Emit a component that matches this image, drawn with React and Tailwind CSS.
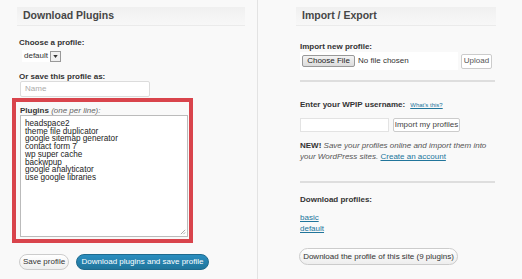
import React from 'react';

const plugins = [
  'headspace2',
  'theme file duplicator',
  'google sitemap generator',
  'contact form 7',
  'wp super cache',
  'backwpup',
  'google analyticator',
  'use google libraries',
];

function SectionTitle({ children, className }) {
  return (
    <div
      className={`h-[19px] flex items-center pl-[6px] text-[10.5px] font-bold text-[#464646] bg-gradient-to-b from-[#f0f0f0] to-[#f8f8f8] border-b border-[#ebebeb] ${className}`}
    >
      {children}
    </div>
  );
}

export default function App() {
  return (
    <div
      className="w-[522px] h-[279px] bg-[#f9f9f9] flex text-[#333] overflow-hidden"
      style={{ fontFamily: '"Liberation Sans", Arial, sans-serif' }}
    >
      {/* Download Plugins */}
      <div className="w-[258px] shrink-0 border-r border-[#e3e3e3] flex flex-col pt-[7px]">
        <SectionTitle className="ml-[17px] w-[228px]">Download Plugins</SectionTitle>

        <div className="ml-[19px] mt-[12px] text-[8px] font-bold leading-[10px]">Choose a profile:</div>
        <div className="ml-[22px] mt-[2px] flex items-center h-[12px]">
          <span className="bg-white h-[12px] px-[2px] text-[8px] leading-[12px]">default</span>
          <span className="w-[11px] h-[11px] border border-[#999] bg-[#f0f0f0] flex items-center justify-center">
            <svg width="5" height="3" viewBox="0 0 6 4"><path d="M0 0h6L3 4z" fill="#333" /></svg>
          </span>
        </div>

        <div className="ml-[19px] mt-[10px] text-[8px] font-bold leading-[9px]">Or save this profile as:</div>
        <div className="ml-[20px] w-[130px] h-[16px] bg-white border border-[#dcdcdc] rounded-[2px] text-[8px] text-[#aaa] pl-[4px] leading-[14px]">
          Name
        </div>

        <div className="ml-[12px] mt-[1px] w-[181px] h-[145px] border-[4px] border-[#d9444c] pl-[4px] pr-[1px] pt-[4px] pb-[2px] flex flex-col">
          <div className="text-[8px] leading-[9px]">
            <span className="font-bold">Plugins</span> <span className="italic text-[#666]">(one per line):</span>
          </div>
          <div className="relative h-[122px] bg-white border border-[#bbb] pl-[4px] pt-[4px] text-[8.2px] leading-[7.7px] text-[#222]">
            {plugins.map((p) => (
              <div key={p}>{p}</div>
            ))}
            <svg className="absolute right-[1px] bottom-[1px]" width="6" height="6" viewBox="0 0 7 7">
              <path d="M6 1L1 6M6 4L4 6" stroke="#999" strokeWidth="1" />
            </svg>
          </div>
        </div>

        <div className="ml-[19px] mt-[11px] flex items-center gap-[7px]">
          <span className="h-[16px] w-[50px] flex items-center justify-center rounded-full border border-[#ccc] bg-gradient-to-b from-white to-[#eee] text-[8px] text-[#333]">
            Save profile
          </span>
          <span className="h-[16px] w-[133px] flex items-center justify-center rounded-full border border-[#1e6a8d] bg-gradient-to-b from-[#2a8ec0] to-[#21759b] text-[8px] text-white">
            Download plugins and save profile
          </span>
        </div>
      </div>

      {/* Import / Export */}
      <div className="flex-1 flex flex-col pt-[7px]">
        <SectionTitle className="ml-[38px] w-[200px]">Import / Export</SectionTitle>

        <div className="ml-[42px] mt-[16px] text-[8px] font-bold leading-[10px]">Import new profile:</div>
        <div className="ml-[42px] flex items-center">
          <div className="w-[158px] h-[18px] bg-white flex items-center pl-[2px] text-[8px]">
            <span className="h-[12px] w-[53px] flex items-center justify-center border border-[#999] rounded-[2px] bg-gradient-to-b from-[#f4f4f4] to-[#dcdcdc] text-[#222]">
              Choose File
            </span>
            <span className="ml-[3px] text-[#333]">No file chosen</span>
          </div>
          <span className="ml-[3px] h-[15px] w-[31px] flex items-center justify-center border border-[#ccc] rounded-[2px] bg-white text-[8px] text-[#555]">
            Upload
          </span>
        </div>

        <div className="ml-[42px] mt-[10px] w-[195px] border-t-2 border-[#dedede]" />

        <div className="ml-[42px] mt-[18px] flex items-baseline gap-[5px] leading-[10px]">
          <span className="text-[8px] font-bold">Enter your WPIP username:</span>
          <span className="text-[6px] text-[#21759b] underline">What's this?</span>
        </div>
        <div className="ml-[42px] mt-[8px] flex items-center gap-[4px]">
          <div className="w-[89px] h-[14px] bg-white border border-[#e3e3e3]" />
          <span className="h-[14px] w-[67px] flex items-center justify-center border border-[#ccc] rounded-[2px] bg-white text-[8px] text-[#444]">
            Import my profiles
          </span>
        </div>

        <div className="ml-[42px] mt-[8px] w-[190px] text-[8px] leading-[11px]">
          <span className="font-bold">NEW!</span>{' '}
          <span className="italic text-[#555]">Save your profiles online and import them into your WordPress sites.</span>{' '}
          <span className="text-[#21759b] underline">Create an account</span>
        </div>

        <div className="ml-[42px] mt-[19px] w-[195px] border-t-2 border-[#dedede]" />

        <div className="ml-[42px] mt-[12px] text-[8px] font-bold leading-[10px]">Download profiles:</div>
        <div className="ml-[42px] mt-[7px] text-[8px] leading-[11px] text-[#21759b] underline flex flex-col">
          <span>basic</span>
          <span>default</span>
        </div>

        <div className="ml-[41px] mt-[14px]">
          <span className="h-[17px] w-[159px] flex items-center justify-center rounded-full border border-[#ccc] bg-gradient-to-b from-white to-[#eee] text-[8px] text-[#333]">
            Download the profile of this site (9 plugins)
          </span>
        </div>
      </div>
    </div>
  );
}
